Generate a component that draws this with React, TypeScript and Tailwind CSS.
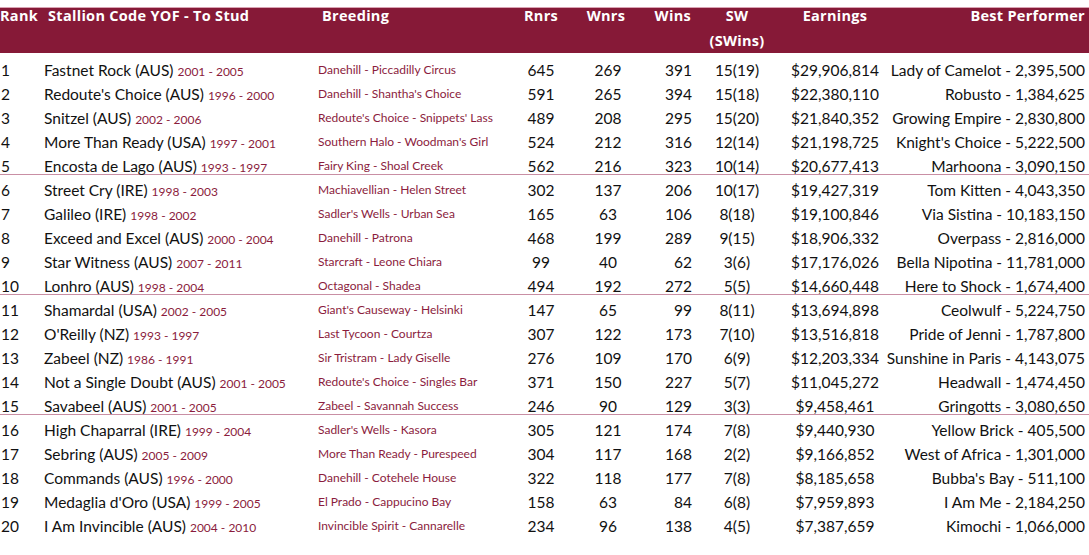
const rows: [string, string, string, string, number, number, number, string, string, string][] = [
  ["1", "Fastnet Rock (AUS)", "2001 - 2005", "Danehill - Piccadilly Circus", 645, 269, 391, "15(19)", "$29,906,814", "Lady of Camelot - 2,395,500"],
  ["2", "Redoute's Choice (AUS)", "1996 - 2000", "Danehill - Shantha's Choice", 591, 265, 394, "15(18)", "$22,380,110", "Robusto - 1,384,625"],
  ["3", "Snitzel (AUS)", "2002 - 2006", "Redoute's Choice - Snippets' Lass", 489, 208, 295, "15(20)", "$21,840,352", "Growing Empire - 2,830,800"],
  ["4", "More Than Ready (USA)", "1997 - 2001", "Southern Halo - Woodman's Girl", 524, 212, 316, "12(14)", "$21,198,725", "Knight's Choice - 5,222,500"],
  ["5", "Encosta de Lago (AUS)", "1993 - 1997", "Fairy King - Shoal Creek", 562, 216, 323, "10(14)", "$20,677,413", "Marhoona - 3,090,150"],
  ["6", "Street Cry (IRE)", "1998 - 2003", "Machiavellian - Helen Street", 302, 137, 206, "10(17)", "$19,427,319", "Tom Kitten - 4,043,350"],
  ["7", "Galileo (IRE)", "1998 - 2002", "Sadler's Wells - Urban Sea", 165, 63, 106, "8(18)", "$19,100,846", "Via Sistina - 10,183,150"],
  ["8", "Exceed and Excel (AUS)", "2000 - 2004", "Danehill - Patrona", 468, 199, 289, "9(15)", "$18,906,332", "Overpass - 2,816,000"],
  ["9", "Star Witness (AUS)", "2007 - 2011", "Starcraft - Leone Chiara", 99, 40, 62, "3(6)", "$17,176,026", "Bella Nipotina - 11,781,000"],
  ["10", "Lonhro (AUS)", "1998 - 2004", "Octagonal - Shadea", 494, 192, 272, "5(5)", "$14,660,448", "Here to Shock - 1,674,400"],
  ["11", "Shamardal (USA)", "2002 - 2005", "Giant's Causeway - Helsinki", 147, 65, 99, "8(11)", "$13,694,898", "Ceolwulf - 5,224,750"],
  ["12", "O'Reilly (NZ)", "1993 - 1997", "Last Tycoon - Courtza", 307, 122, 173, "7(10)", "$13,516,818", "Pride of Jenni - 1,787,800"],
  ["13", "Zabeel (NZ)", "1986 - 1991", "Sir Tristram - Lady Giselle", 276, 109, 170, "6(9)", "$12,203,334", "Sunshine in Paris - 4,143,075"],
  ["14", "Not a Single Doubt (AUS)", "2001 - 2005", "Redoute's Choice - Singles Bar", 371, 150, 227, "5(7)", "$11,045,272", "Headwall - 1,474,450"],
  ["15", "Savabeel (AUS)", "2001 - 2005", "Zabeel - Savannah Success", 246, 90, 129, "3(3)", "$9,458,461", "Gringotts - 3,080,650"],
  ["16", "High Chaparral (IRE)", "1999 - 2004", "Sadler's Wells - Kasora", 305, 121, 174, "7(8)", "$9,440,930", "Yellow Brick - 405,500"],
  ["17", "Sebring (AUS)", "2005 - 2009", "More Than Ready - Purespeed", 304, 117, 168, "2(2)", "$9,166,852", "West of Africa - 1,301,000"],
  ["18", "Commands (AUS)", "1996 - 2000", "Danehill - Cotehele House", 322, 118, 177, "7(8)", "$8,185,658", "Bubba's Bay - 511,100"],
  ["19", "Medaglia d'Oro (USA)", "1999 - 2005", "El Prado - Cappucino Bay", 158, 63, 84, "6(8)", "$7,959,893", "I Am Me - 2,184,250"],
  ["20", "I Am Invincible (AUS)", "2004 - 2010", "Invincible Spirit - Cannarelle", 234, 96, 138, "4(5)", "$7,387,659", "Kimochi - 1,066,000"],
];

const cols = "grid grid-cols-[44px_274px_192px_62px_72px_56px_74px_122px_minmax(0,1fr)]";

const App = () => {
  return (
    <div className="w-[1089px] h-[555px] bg-white overflow-hidden font-['Lato',sans-serif] text-[#111]">
      <div className="mt-[7px] h-[46px] border-t border-[#d9a3b3] bg-[#861937] text-white font-['Open_Sans',sans-serif] font-bold text-[14.5px] tracking-[0.3px]">
        <div className={`${cols} leading-[15px]`}>
          <div>Rank</div>
          <div className="pl-1 whitespace-nowrap">Stallion Code YOF - To Stud</div>
          <div className="pl-1">Breeding</div>
          <div className="text-center">Rnrs</div>
          <div className="text-center pr-1">Wnrs</div>
          <div className="text-right pr-[9px]">Wins</div>
          <div className="text-center">
            <div>SW</div>
            <div className="mt-[10px]">(SWins)</div>
          </div>
          <div className="text-center">Earnings</div>
          <div className="flex justify-end pr-[4px] whitespace-nowrap">
            <span className="shrink-0">Best Performer</span>
          </div>
        </div>
      </div>
      <div className="mt-[2px]">
        {rows.map((r) => {
          const sep = r[0] === "5" || r[0] === "10" || r[0] === "15";
          return (
            <div
              key={r[0]}
              className={`${cols} h-[24px] pt-[6px] leading-[18px] text-[15.5px] ${sep ? "border-b border-[#c98fa4]" : ""}`}
            >
              <div className="pl-[1px]">{r[0]}</div>
              <div className="whitespace-nowrap">
                {r[1]} <span className="text-[12px] text-[#8b1c3d]">{r[2]}</span>
              </div>
              <div className="whitespace-nowrap text-[12px] text-[#8b1c3d]">{r[3]}</div>
              <div className="text-center">{r[4]}</div>
              <div className="text-center">{r[5]}</div>
              <div className="text-right pr-[8px]">{r[6]}</div>
              <div className="text-center">{r[7]}</div>
              <div className="text-center">{r[8]}</div>
              <div className="flex justify-end pr-[4px] whitespace-nowrap">
                <span className="shrink-0">{r[9]}</span>
              </div>
            </div>
          );
        })}
      </div>
    </div>
  );
};

export default App;
